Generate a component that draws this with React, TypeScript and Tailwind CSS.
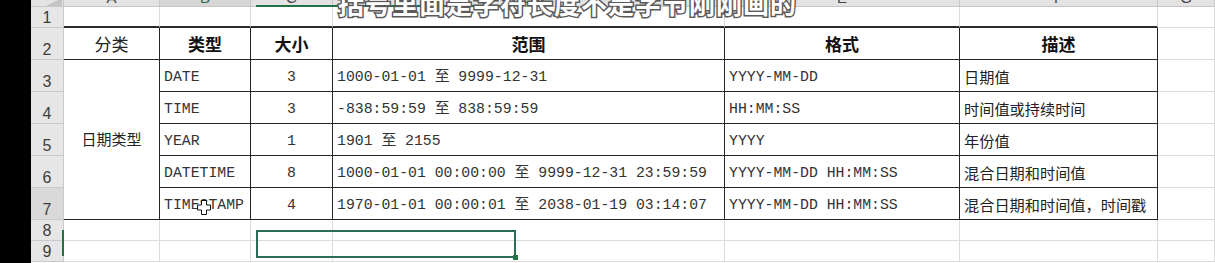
import { Fragment } from 'react'

const MONO = "font-['Liberation_Mono','Noto_Sans_CJK_SC',monospace]"
const CJK = "font-['Noto_Sans_CJK_SC',sans-serif]"

const rows = [
  { type: 'DATE', size: '3', range: '1000-01-01 至 9999-12-31', fmt: 'YYYY-MM-DD', desc: '日期值' },
  { type: 'TIME', size: '3', range: '-838:59:59 至 838:59:59', fmt: 'HH:MM:SS', desc: '时间值或持续时间' },
  { type: 'YEAR', size: '1', range: '1901 至 2155', fmt: 'YYYY', desc: '年份值' },
  { type: 'DATETIME', size: '8', range: '1000-01-01 00:00:00 至 9999-12-31 23:59:59', fmt: 'YYYY-MM-DD HH:MM:SS', desc: '混合日期和时间值' },
  { type: 'TIMESTAMP', size: '4', range: '1970-01-01 00:00:01 至 2038-01-19 03:14:07', fmt: 'YYYY-MM-DD HH:MM:SS', desc: '混合日期和时间值，时间戳' },
]

const letters = ['A', 'B', 'C', 'D', 'E', 'F', 'G']
const headers = ['类型', '大小', '范围', '格式', '描述']

function RowNum({ n, dark }: { n: number; dark?: boolean }) {
  return (
    <div
      className={`flex items-end justify-center text-[16px] leading-[18px] text-[#3c3c3c] border-r border-b border-[#c9c9c9] font-['Liberation_Sans',sans-serif] ${dark ? 'bg-[#d9d9d9]' : 'bg-[#e6e6e6]'}`}
    >
      {n}
    </div>
  )
}

function Blank({ cls = '' }: { cls?: string }) {
  return <div className={`border-r border-b border-[#dcdcdc] ${cls}`} />
}

const cell = 'border-r border-b border-[#262626] flex items-center'
const mono = `${cell} pt-[3px] ${MONO} text-[14.8px] text-[#333] whitespace-pre`

export default function App() {
  return (
    <div className="relative w-[1215px] h-[263px] overflow-hidden bg-white">
      <div className="grid grid-cols-[31px_33px_96px_91px_82px_392px_235px_198px_1fr] grid-rows-[7px_21px_32px_32px_32px_32px_32px_32px_21px_21px_1fr] h-full">
        <div className="row-span-full bg-black" />

        {/* column headers */}
        <div className="bg-[#e3e3e3] border-r border-b border-[#c6c6c6] overflow-hidden">
          <div className="ml-[15px] mt-[-2px] w-0 h-0 border-l-[16px] border-l-transparent border-b-[8px] border-b-[#c4c4c4]" />
        </div>
        {letters.map((l) => (
          <div
            key={l}
            className={`overflow-hidden flex justify-center border-r border-b border-[#c6c6c6] ${l === 'B' ? 'bg-[#d6d6d6]' : 'bg-[#e3e3e3]'}`}
          >
            <span className={`mt-[-10px] text-[15px] leading-[15px] font-['Liberation_Sans',sans-serif] ${l === 'B' ? 'text-[#2f6b47]' : 'text-[#444]'}`}>{l}</span>
          </div>
        ))}

        {/* row 1 */}
        <RowNum n={1} />
        {letters.slice(0, 6).map((l) => (
          <div key={l} className="border-r border-r-[#dcdcdc] border-b-2 border-b-[#2b2b2b]" />
        ))}
        <Blank />

        {/* row 2 */}
        <RowNum n={2} />
        <div className={`${cell} justify-center ${CJK} text-[17px] text-[#222]`}>分类</div>
        {headers.map((h) => (
          <div key={h} className={`${cell} justify-center ${CJK} text-[17px] font-bold text-[#111]`}>
            {h}
          </div>
        ))}
        <Blank />

        {/* data rows */}
        {rows.map((r, i) => (
          <Fragment key={r.type}>
            <RowNum n={i + 3} dark={i === 4} />
            {i === 0 && (
              <div className={`${cell} row-span-5 justify-center ${CJK} text-[15px] text-[#222]`}>日期类型</div>
            )}
            <div className={`${mono} pl-[4px]`}>{r.type}</div>
            <div className={`${mono} justify-center`}>{r.size}</div>
            <div className={`${mono} pl-[4px]`}>{r.range}</div>
            <div className={`${mono} pl-[4px]`}>{r.fmt}</div>
            <div className={`${cell} pt-[2px] pl-[4px] ${CJK} text-[15.2px] text-[#222] whitespace-nowrap`}>{r.desc}</div>
            <Blank />
          </Fragment>
        ))}

        {/* rows 8, 9 */}
        {[8, 9].map((n) => (
          <Fragment key={n}>
            <RowNum n={n} />
            {letters.map((l) => (
              <Blank key={l} />
            ))}
          </Fragment>
        ))}
      </div>

      {/* selection indicators */}
      <div className="absolute left-[256px] top-[5px] w-[259px] h-[2px] bg-[#217346]" />
      <div className="absolute left-[62px] top-[230px] w-[2px] h-[26px] bg-[#217346]" />
      <div className="absolute left-[256px] top-[230px] w-[260px] h-[28px] border-2 border-[#2c6e55]" />
      <div className="absolute left-[513px] top-[255px] w-[5px] h-[5px] bg-[#217346]" />

      {/* cell cursor */}
      <svg className="absolute left-[197px] top-[200px]" width="14" height="15" viewBox="0 0 14 15">
        <path d="M4.5 0.5h5v4.5h4v5h-4v4.5h-5v-4.5h-4v-5h4z" fill="#fff" stroke="#111" strokeWidth="1" />
      </svg>

      {/* subtitle overlay */}
      <div
        className={`absolute left-[338px] top-[-10px] ${CJK} font-bold text-[26px] leading-[26px] tracking-[1px] text-white whitespace-nowrap [-webkit-text-stroke:3px_#5a5a5a] [paint-order:stroke_fill]`}
      >
        括号里面是字符长度不是字节刚刚画的
      </div>
    </div>
  )
}
